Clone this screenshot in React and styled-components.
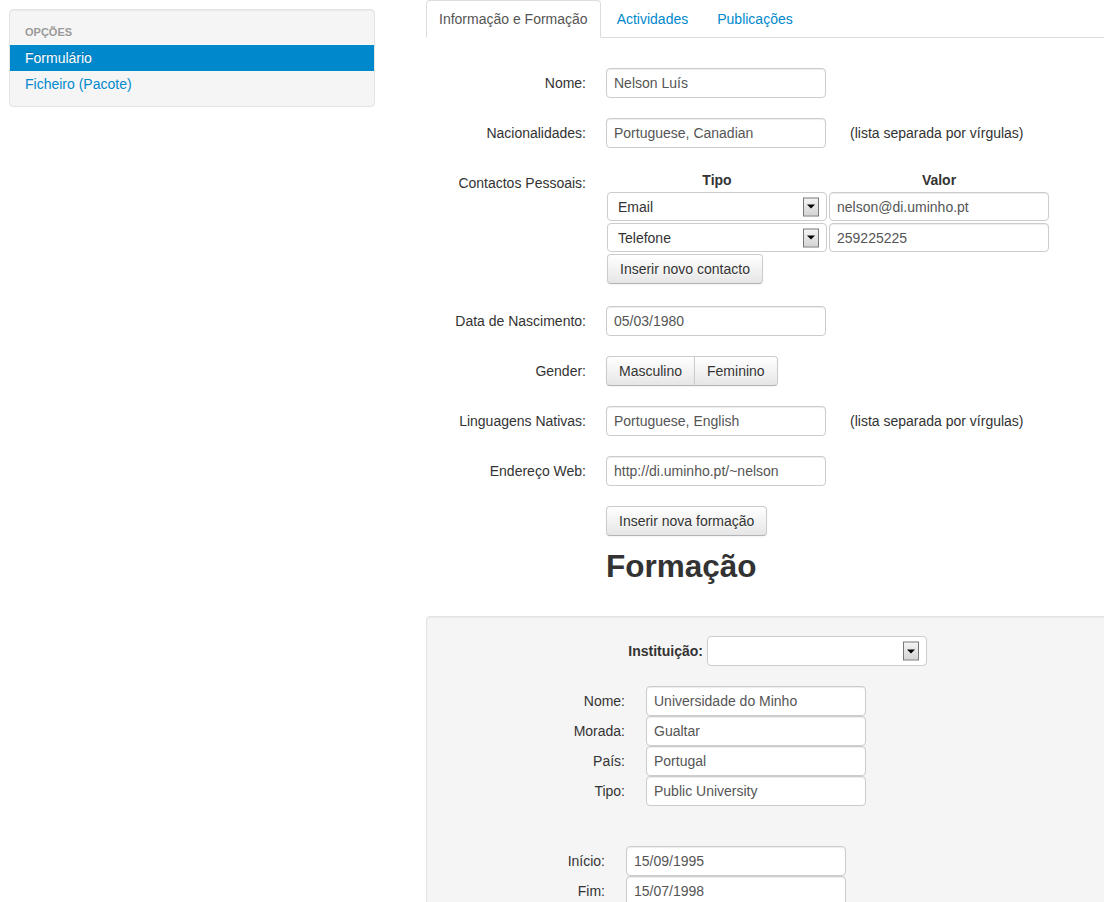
import React from 'react'
import styled, { createGlobalStyle } from 'styled-components'

const Global = createGlobalStyle`
  html, body {
    margin: 0;
    padding: 0;
    overflow: hidden;
    background: #fff;
  }
  body {
    font-family: "Liberation Sans", Arial, sans-serif;
    font-size: 14px;
    line-height: 20px;
    color: #333;
  }
  * { box-sizing: border-box; }
`

const Page = styled.div`
  display: grid;
  grid-template-columns: 426px 720px;
  height: 902px;
`

const SideCol = styled.div`
  padding: 9px;
`

const Well = styled.div`
  width: 366px;
  background: #f5f5f5;
  border: 1px solid #e3e3e3;
  border-radius: 4px;
  box-shadow: inset 0 1px 1px rgba(0, 0, 0, 0.05);
  padding: 9px 0;
`

const NavHeader = styled.div`
  padding: 3px 15px;
  font-size: 11px;
  font-weight: bold;
  line-height: 20px;
  color: #999;
  text-transform: uppercase;
  text-shadow: 0 1px 0 rgba(255, 255, 255, 0.5);
`

const NavItem = styled.a`
  display: block;
  padding: 3px 15px;
  line-height: 20px;
  text-decoration: none;
  color: ${p => (p.$active ? '#fff' : '#0088cc')};
  background: ${p => (p.$active ? '#0088cc' : 'transparent')};
  text-shadow: ${p => (p.$active ? '0 -1px 0 rgba(0,0,0,0.2)' : '0 1px 0 rgba(255,255,255,0.5)')};
`

const Main = styled.div`
  display: flex;
  flex-direction: column;
`

const Tabs = styled.ul`
  display: flex;
  list-style: none;
  margin: 0 0 30px;
  padding: 0;
  border-bottom: 1px solid #ddd;
`

const Tab = styled.li`
  margin: 0 3px ${p => (p.$active ? '-1px' : '0')} 0;
  padding: ${p => (p.$active ? '8px 12px' : '8px 12px 7px')};
  line-height: 20px;
  border: 1px solid ${p => (p.$active ? '#ddd' : 'transparent')};
  border-bottom-color: ${p => (p.$active ? '#fff' : 'transparent')};
  border-bottom-width: ${p => (p.$active ? '1px' : '0')};
  border-radius: 4px 4px 0 0;
  background: ${p => (p.$active ? '#fff' : 'transparent')};
  color: ${p => (p.$active ? '#555' : '#0088cc')};
`

const Group = styled.div`
  display: flex;
  align-items: flex-start;
  margin-bottom: ${p => p.$mb ?? 20}px;
`

const Label = styled.label`
  width: 160px;
  flex: none;
  padding-top: 5px;
  text-align: right;
  line-height: 20px;
`

const Controls = styled.div`
  margin-left: 20px;
  display: flex;
  align-items: center;
`

const Input = styled.div`
  width: 220px;
  height: ${p => p.$h ?? 30}px;
  flex: none;
  padding: 0 7px;
  display: flex;
  align-items: center;
  background: #fff;
  border: 1px solid #ccc;
  border-radius: 4px;
  color: #555;
  box-shadow: inset 0 1px 1px rgba(0, 0, 0, 0.075);
  white-space: nowrap;
`

const Help = styled.span`
  margin-left: 24px;
  color: #333;
`

const SelectBox = styled.div`
  position: relative;
  width: 220px;
  height: ${p => p.$h ?? 30}px;
  padding: 0 10px;
  display: flex;
  align-items: center;
  background: #fff;
  border: 1px solid #ccc;
  border-radius: 4px;
  color: #333;
`

const Arrow = styled.span`
  position: absolute;
  right: 7px;
  top: 50%;
  transform: translateY(-50%);
  width: 16px;
  height: 19px;
  border: 1px solid #777;
  background: linear-gradient(#f4f4f4, #d4d4d4);
  display: flex;
  align-items: center;
  justify-content: center;
  &::after {
    content: '';
    border-left: 4px solid transparent;
    border-right: 4px solid transparent;
    border-top: 4px solid #000;
  }
`

const ContactGrid = styled.div`
  display: grid;
  grid-template-columns: 220px 220px;
  grid-auto-rows: auto;
  gap: 2px;
  padding: 2px 0 2px 1px;
`

const ColHead = styled.div`
  text-align: center;
  font-weight: bold;
  line-height: 20px;
`

const Button = styled.button`
  font-family: inherit;
  font-size: 14px;
  line-height: 20px;
  height: 30px;
  padding: 4px 12px;
  color: #333;
  background: linear-gradient(#ffffff, #e6e6e6);
  border: 1px solid #ccc;
  border-bottom-color: #b3b3b3;
  border-radius: ${p => p.$radius ?? '4px'};
  box-shadow: inset 0 1px 0 rgba(255, 255, 255, 0.2), 0 1px 2px rgba(0, 0, 0, 0.05);
  text-shadow: 0 1px 1px rgba(255, 255, 255, 0.75);
  cursor: pointer;
  justify-self: start;
  & + & { margin-left: -1px; }
`

const Heading = styled.h2`
  margin: 10px 0 30px 180px;
  font-size: 31.5px;
  line-height: 40px;
  font-weight: bold;
  color: #333;
`

const Panel = styled.div`
  background: #f5f5f5;
  border: 1px solid #e3e3e3;
  border-radius: 4px;
  box-shadow: inset 0 1px 1px rgba(0, 0, 0, 0.05);
  padding: 19px 0 40px;
  width: 720px;
  flex: 1;
`

const FieldRow = styled.div`
  display: grid;
  grid-template-columns: ${p => p.$label}px 220px;
  column-gap: ${p => p.$gap}px;
  align-items: center;
  margin-bottom: ${p => p.$mb ?? 0}px;
  height: ${p => p.$h ?? 30}px;
`

const FieldLabel = styled.span`
  text-align: right;
  font-weight: ${p => (p.$bold ? 'bold' : 'normal')};
`

const Stack = styled.div`
  margin-bottom: ${p => p.$mb ?? 0}px;
`

const contacts = [
  { type: 'Email', value: 'nelson@di.uminho.pt' },
  { type: 'Telefone', value: '259225225' },
]

const institution = [
  ['Nome:', 'Universidade do Minho'],
  ['Morada:', 'Gualtar'],
  ['País:', 'Portugal'],
  ['Tipo:', 'Public University'],
]

const App = () => {
  return (
    <>
      <Global />
      <Page>
        <SideCol>
          <Well>
            <NavHeader>Opções</NavHeader>
            <NavItem $active>Formulário</NavItem>
            <NavItem>Ficheiro (Pacote)</NavItem>
          </Well>
        </SideCol>

        <Main>
          <Tabs>
            <Tab $active>Informação e Formação</Tab>
            <Tab>Actividades</Tab>
            <Tab>Publicações</Tab>
          </Tabs>

          <Group>
            <Label>Nome:</Label>
            <Controls><Input>Nelson Luís</Input></Controls>
          </Group>

          <Group>
            <Label>Nacionalidades:</Label>
            <Controls>
              <Input>Portuguese, Canadian</Input>
              <Help>(lista separada por vírgulas)</Help>
            </Controls>
          </Group>

          <Group>
            <Label>Contactos Pessoais:</Label>
            <Controls>
              <ContactGrid>
                <ColHead>Tipo</ColHead>
                <ColHead>Valor</ColHead>
                {contacts.map(c => (
                  <React.Fragment key={c.type}>
                    <SelectBox $h={29}>{c.type}<Arrow /></SelectBox>
                    <Input $h={29}>{c.value}</Input>
                  </React.Fragment>
                ))}
                <Button>Inserir novo contacto</Button>
              </ContactGrid>
            </Controls>
          </Group>

          <Group>
            <Label>Data de Nascimento:</Label>
            <Controls><Input>05/03/1980</Input></Controls>
          </Group>

          <Group>
            <Label>Gender:</Label>
            <Controls>
              <Button $radius="4px 0 0 4px">Masculino</Button>
              <Button $radius="0 4px 4px 0">Feminino</Button>
            </Controls>
          </Group>

          <Group>
            <Label>Linguagens Nativas:</Label>
            <Controls>
              <Input>Portuguese, English</Input>
              <Help>(lista separada por vírgulas)</Help>
            </Controls>
          </Group>

          <Group>
            <Label>Endereço Web:</Label>
            <Controls><Input>http://di.uminho.pt/~nelson</Input></Controls>
          </Group>

          <Group $mb={0}>
            <Label />
            <Controls><Button>Inserir nova formação</Button></Controls>
          </Group>

          <Heading>Formação</Heading>

          <Panel>
            <FieldRow $label={276} $gap={4} $mb={20}>
              <FieldLabel $bold>Instituição:</FieldLabel>
              <SelectBox><Arrow /></SelectBox>
            </FieldRow>

            <Stack $mb={40}>
              {institution.map(([k, v]) => (
                <FieldRow key={k} $label={198} $gap={21}>
                  <FieldLabel>{k}</FieldLabel>
                  <Input $h={30}>{v}</Input>
                </FieldRow>
              ))}
            </Stack>

            <Stack>
              <FieldRow $label={178} $gap={21}>
                <FieldLabel>Início:</FieldLabel>
                <Input>15/09/1995</Input>
              </FieldRow>
              <FieldRow $label={178} $gap={21}>
                <FieldLabel>Fim:</FieldLabel>
                <Input>15/07/1998</Input>
              </FieldRow>
            </Stack>
          </Panel>
        </Main>
      </Page>
    </>
  )
}

export default App
